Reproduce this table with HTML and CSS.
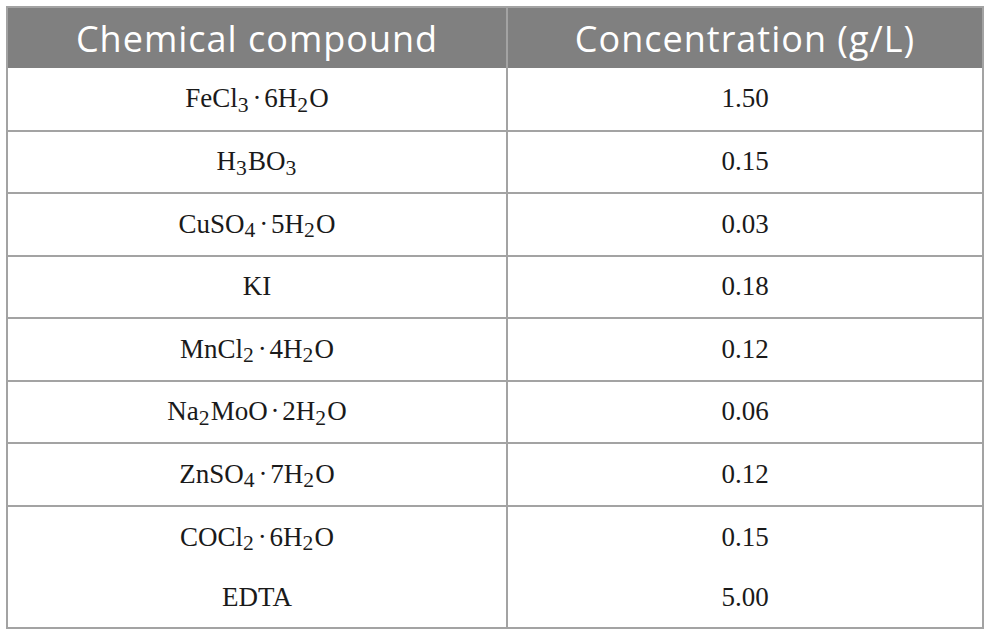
FILE: index.html
```html
<!DOCTYPE html>
<html lang="en">
<head>
<meta charset="UTF-8" />
<title>Trace elements solution</title>
<link rel="stylesheet" href="styles.css">
</head>
<body>
<table class="data-table">
    <thead>
        <tr>
            <th class="col-compound">Chemical compound</th>
            <th>Concentration (g/L)</th>
        </tr>
    </thead>
    <tbody>
        <tr><td>FeCl<sub>3</sub><span class="dot">·</span>6H<sub>2</sub>O</td><td>1.50</td></tr>
        <tr><td>H<sub>3</sub>BO<sub>3</sub></td><td>0.15</td></tr>
        <tr><td>CuSO<sub>4</sub><span class="dot">·</span>5H<sub>2</sub>O</td><td>0.03</td></tr>
        <tr><td>KI</td><td>0.18</td></tr>
        <tr><td>MnCl<sub>2</sub><span class="dot">·</span>4H<sub>2</sub>O</td><td>0.12</td></tr>
        <tr><td>Na<sub>2</sub>MoO<span class="dot">·</span>2H<sub>2</sub>O</td><td>0.06</td></tr>
        <tr><td>ZnSO<sub>4</sub><span class="dot">·</span>7H<sub>2</sub>O</td><td>0.12</td></tr>
        <tr class="no-line"><td>COCl<sub>2</sub><span class="dot">·</span>6H<sub>2</sub>O</td><td>0.15</td></tr>
        <tr><td>EDTA</td><td>5.00</td></tr>
    </tbody>
</table>
</body>
</html>
```

FILE: styles.css
```css
* {
    box-sizing: border-box;
}
body {
    margin: 0;
    padding: 6px 0 0 6px;
    background: white;
}
.data-table {
    width: 978px;
    border-collapse: collapse;
    border: 2px solid #a3a3a3;
}
th {
    background: #808080;
    color: white;
    font-family: "Open Sans", sans-serif;
    font-weight: normal;
    font-size: 36px;
    letter-spacing: 1px;
    height: 61px;
    padding: 0;
    text-align: center;
    border-left: 2px solid #a3a3a3;
}
th.col-compound {
    width: 500px;
    border-left: none;
}
td {
    font-family: "Liberation Serif", serif;
    font-size: 27px;
    color: #1a1a1a;
    text-align: center;
    height: 62.5px;
    padding: 0;
    border-bottom: 2px solid #a3a3a3;
    border-left: 2px solid #a3a3a3;
}
td:first-child {
    border-left: none;
}
tr.no-line td {
    border-bottom: none;
}
tbody tr:last-child td {
    height: 60px;
}
sub {
    font-size: 0.8em;
    vertical-align: -0.2em;
    line-height: 0;
    margin-right: 0.06em;
}
.dot {
    margin: 0 0.1em;
}
```
